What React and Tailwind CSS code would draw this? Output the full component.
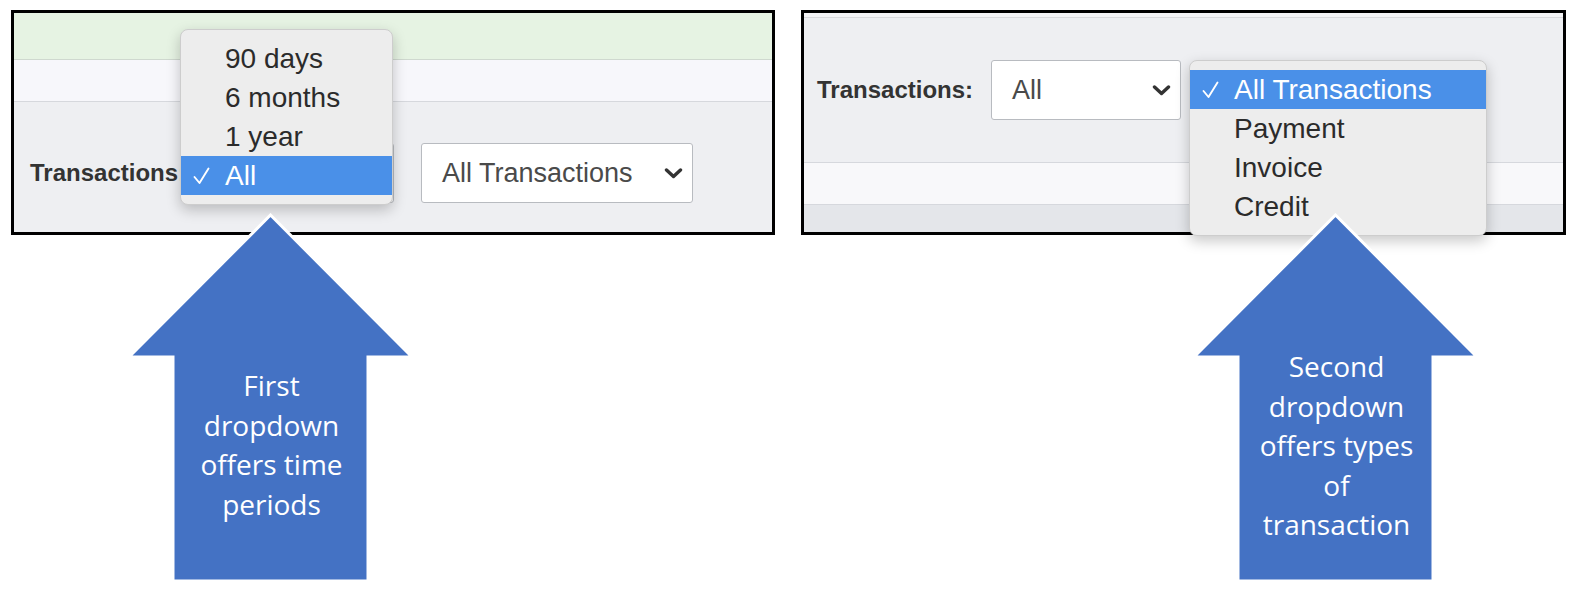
const ui = { fontFamily: '"Liberation Sans", Arial, sans-serif' };

const Chevron = () => (
  <svg width="19" height="11" viewBox="0 0 19 11" className="shrink-0">
    <polyline points="2.5,2 9.5,8.5 16.5,2" fill="none" stroke="#333" strokeWidth="3.4" strokeLinecap="round" strokeLinejoin="round" />
  </svg>
);

const Check = () => (
  <svg width="17" height="18" viewBox="0 0 17 18">
    <polyline points="1.5,10 6.5,16 15.5,1.5" fill="none" stroke="currentColor" strokeWidth="1.9" strokeLinecap="round" strokeLinejoin="round" />
  </svg>
);

// a select box; value can be left empty where a menu lies on top of it
function Select({ value, width }) {
  return (
    <div
      className="h-[60px] shrink-0 flex items-center justify-between pl-5 pr-[9px] bg-white border border-[#b8bbc0] rounded-[3px] text-[27px] text-[#4a4a4a]"
      style={{ width }}
    >
      <span>{value}</span>
      <Chevron />
    </div>
  );
}

function Menu({ items, selected, className }) {
  return (
    <div className={`absolute z-10 py-[9px] bg-[#ededed] border border-[#cdcdcd] rounded-[8px] shadow-[0_5px_14px_rgba(0,0,0,0.22)] ${className}`}>
      {items.map((it) => (
        <div
          key={it}
          className={`h-[39px] flex items-center text-[28px] ${it === selected ? "bg-[#4a90e8] text-white" : "text-[#2b2b2b]"}`}
        >
          <span className="w-[44px] pl-[12px] flex items-center">{it === selected && <Check />}</span>
          <span>{it}</span>
        </div>
      ))}
    </div>
  );
}

function Label() {
  return <span className="w-[157px] shrink-0 mr-[17px] text-[24px] font-bold text-[#333] whitespace-nowrap">Transactions:</span>;
}

function Arrow({ lines, textTop }) {
  return (
    <div className="relative w-[285px] h-[370px]">
      <svg width="285" height="370" viewBox="0 0 285 370" className="absolute inset-0">
        <polygon
          points="141.5,2 283,144 239,144 239,368 44,368 44,144 0,144"
          fill="#4472c4"
          stroke="#ffffff"
          strokeWidth="3"
          strokeLinejoin="miter"
        />
      </svg>
      <div
        className="relative flex flex-col items-center text-white text-[28px] font-medium leading-[39.5px]"
        style={{ paddingTop: textTop, fontFamily: '"Open Sans", Lato, sans-serif' }}
      >
        {lines.map((l) => (
          <span key={l}>{l}</span>
        ))}
      </div>
    </div>
  );
}

export default function App() {
  return (
    <div className="w-[1572px] h-[594px] bg-white overflow-hidden" style={ui}>
      {/* panels */}
      <div className="flex pt-[10px] pl-[11px] gap-[26px]">
        {/* first panel */}
        <div className="relative w-[764px] h-[225px] border-[3px] border-black flex flex-col bg-[#eeeff2]">
          <div className="h-[47px] shrink-0 bg-[#e6f3e3] border-b border-[#cfd8cf]" />
          <div className="h-[42px] shrink-0 bg-[#f7f7fb] border-b border-[#d6d8dd]" />
          <div className="flex items-center pt-[41px] pl-[16px]">
            <Label />
            <Select value="" width={190} />
            <div className="w-[27px] shrink-0" />
            <Select value="All Transactions" width={272} />
          </div>
          <Menu items={["90 days", "6 months", "1 year", "All"]} selected="All" className="left-[166px] top-[16px] w-[213px]" />
        </div>

        {/* second panel */}
        <div className="relative w-[765px] h-[225px] border-[3px] border-black flex flex-col bg-[#eeeff2]">
          <div className="h-[5px] shrink-0 bg-[#f4f4f6] border-b border-[#d9dadd]" />
          <div className="h-[144px] shrink-0 flex items-center pl-[13px]">
            <Label />
            <Select value="All" width={190} />
            <div className="w-[29px] shrink-0" />
            <Select value="" width={272} />
          </div>
          <div className="h-[43px] shrink-0 bg-[#f8f8fa] border-y border-[#d6d8dd]" />
          <div className="flex-1 bg-[#e4e6ea]" />
          <Menu
            items={["All Transactions", "Payment", "Invoice", "Credit"]}
            selected="All Transactions"
            className="left-[385px] top-[47px] w-[298px]"
          />
        </div>
      </div>

      {/* arrows */}
      <div className="relative z-20 flex -mt-[22px]">
        <div className="ml-[129px]">
          <Arrow lines={["First", "dropdown", "offers time", "periods"]} textTop={153} />
        </div>
        <div className="ml-[780px]">
          <Arrow lines={["Second", "dropdown", "offers types", "of", "transaction"]} textTop={134} />
        </div>
      </div>
    </div>
  );
}
